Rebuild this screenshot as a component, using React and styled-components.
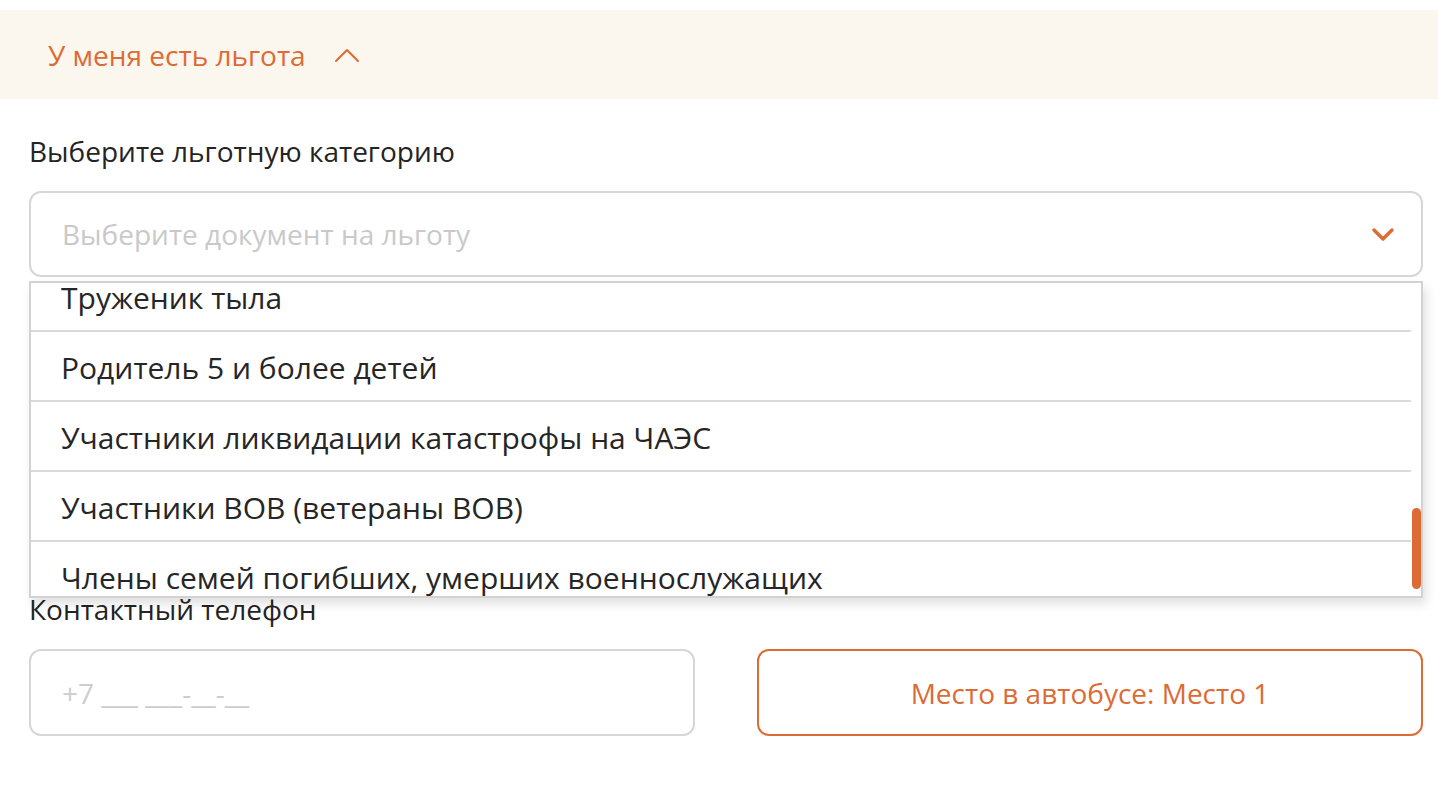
import React, { useLayoutEffect, useRef, useState } from "react";
import styled, { createGlobalStyle } from "styled-components";

const ORANGE = "#dc6b35";

const GlobalStyle = createGlobalStyle`
  html, body {
    margin: 0;
    padding: 0;
    background: #fff;
  }
  body {
    font-family: "Open Sans", "Noto Sans", sans-serif;
    color: #2a2a2a;
  }
  * {
    box-sizing: border-box;
  }
`;

const categories = [
  "Пенсионер",
  "Инвалид I группы",
  "Инвалид II группы",
  "Инвалид III группы",
  "Ребенок-инвалид",
  "Сопровождающий инвалида I группы",
  "Сопровождающий ребенка-инвалида",
  "Ветеран труда",
  "Ветеран боевых действий",
  "Многодетная семья",
  "Студент очной формы обучения",
  "Школьник",
  "Труженик тыла",
  "Родитель 5 и более детей",
  "Участники ликвидации катастрофы на ЧАЭС",
  "Участники ВОВ (ветераны ВОВ)",
  "Члены семей погибших, умерших военнослужащих",
];

const App = () => {
  const listRef = useRef(null);
  const [thumb, setThumb] = useState({ top: 0, height: 0 });

  // custom scrollbar thumb, native one is hidden
  const updateThumb = () => {
    const el = listRef.current;
    if (!el) return;
    const track = el.clientHeight - 6;
    const height = Math.max(30, (el.clientHeight / el.scrollHeight) * track);
    const max = el.scrollHeight - el.clientHeight;
    const top = max > 0 ? (el.scrollTop / max) * (track - height) : 0;
    setThumb({ top: top + 3, height });
  };

  useLayoutEffect(() => {
    if (listRef.current) {
      listRef.current.scrollTop = 12 * 70 + 21;
      updateThumb();
    }
  }, []);

  return (
    <Page>
      <GlobalStyle />
      <Toggle>
        <span>У меня есть льгота</span>
        <svg width="26" height="18" viewBox="0 0 26 18" fill="none">
          <polyline
            points="2,16 13,5 24,16"
            stroke={ORANGE}
            strokeWidth="2"
            strokeLinecap="round"
            strokeLinejoin="round"
          />
        </svg>
      </Toggle>

      <Form>
        <Field>
          <Label>Выберите льготную категорию</Label>
          <SelectWrap>
            <SelectBox>
              <Placeholder>Выберите документ на льготу</Placeholder>
              <svg width="24" height="16" viewBox="0 0 24 16" fill="none">
                <polyline
                  points="3,4 12,13 21,4"
                  stroke={ORANGE}
                  strokeWidth="3.5"
                  strokeLinecap="round"
                  strokeLinejoin="round"
                />
              </svg>
            </SelectBox>
            <Menu>
              <MenuList ref={listRef} onScroll={updateThumb}>
                {categories.map((c) => (
                  <Option key={c}>{c}</Option>
                ))}
              </MenuList>
              <Thumb style={{ top: thumb.top, height: thumb.height }} />
            </Menu>
          </SelectWrap>
        </Field>

        <Field $top={314}>
          <Label>Контактный телефон</Label>
          <Row>
            <Input placeholder="+7 ___ ___-__-__" />
            <SeatButton>Место в автобусе: Место 1</SeatButton>
          </Row>
        </Field>
      </Form>
    </Page>
  );
};

const Page = styled.main`
  padding-top: 10px;
  min-height: 806px;
`;

const Toggle = styled.div`
  height: 89px;
  background: #fcf7ee;
  display: flex;
  align-items: center;
  gap: 28px;
  padding: 0 48px;
  color: ${ORANGE};
  font-size: 28px;

  svg {
    margin-top: -2px;
  }
`;

const Form = styled.div`
  display: flex;
  flex-direction: column;
  padding: 34px 15px 0 29px;
`;

const Field = styled.div`
  display: flex;
  flex-direction: column;
  gap: 22px;
  margin-top: ${(p) => p.$top || 0}px;
`;

const Label = styled.div`
  font-size: 28px;
  line-height: 36px;
  color: #242424;
`;

const SelectWrap = styled.div`
  position: relative;
`;

const SelectBox = styled.div`
  height: 86px;
  border: 2px solid #d6d6d6;
  border-radius: 12px;
  display: flex;
  align-items: center;
  justify-content: space-between;
  padding: 0 26px 0 31px;
`;

const Placeholder = styled.span`
  font-size: 28px;
  color: #c9c9c9;
`;

const Menu = styled.div`
  position: absolute;
  top: calc(100% + 4px);
  left: 0;
  right: 0;
  height: 317px;
  background: #fff;
  border: 2px solid #d2d2d2;
  box-shadow: 3px 6px 10px rgba(0, 0, 0, 0.12);
  z-index: 10;
`;

const MenuList = styled.div`
  height: 100%;
  overflow-y: auto;
  scrollbar-width: none;

  &::-webkit-scrollbar {
    display: none;
  }
`;

const Thumb = styled.div`
  position: absolute;
  right: 0;
  width: 9px;
  border-radius: 5px;
  background: ${ORANGE};
`;

const Option = styled.div`
  height: 70px;
  display: flex;
  align-items: center;
  margin-right: 10px;
  padding: 2px 0 0 30px;
  font-size: 30px;
  color: #262626;
  border-bottom: 2px solid #dadada;
  white-space: nowrap;
`;

const Row = styled.div`
  display: grid;
  grid-template-columns: 1fr 1fr;
  gap: 62px;
`;

const Input = styled.input`
  height: 87px;
  border: 2px solid #d6d6d6;
  border-radius: 12px;
  padding: 0 31px;
  font-family: inherit;
  font-size: 28px;
  color: #2a2a2a;
  outline: none;

  &::placeholder {
    color: #cdcdcd;
  }
`;

const SeatButton = styled.button`
  height: 87px;
  border: 2px solid ${ORANGE};
  border-radius: 12px;
  background: #fff;
  color: ${ORANGE};
  font-family: inherit;
  font-size: 28px;
  cursor: pointer;
`;

export default App;
